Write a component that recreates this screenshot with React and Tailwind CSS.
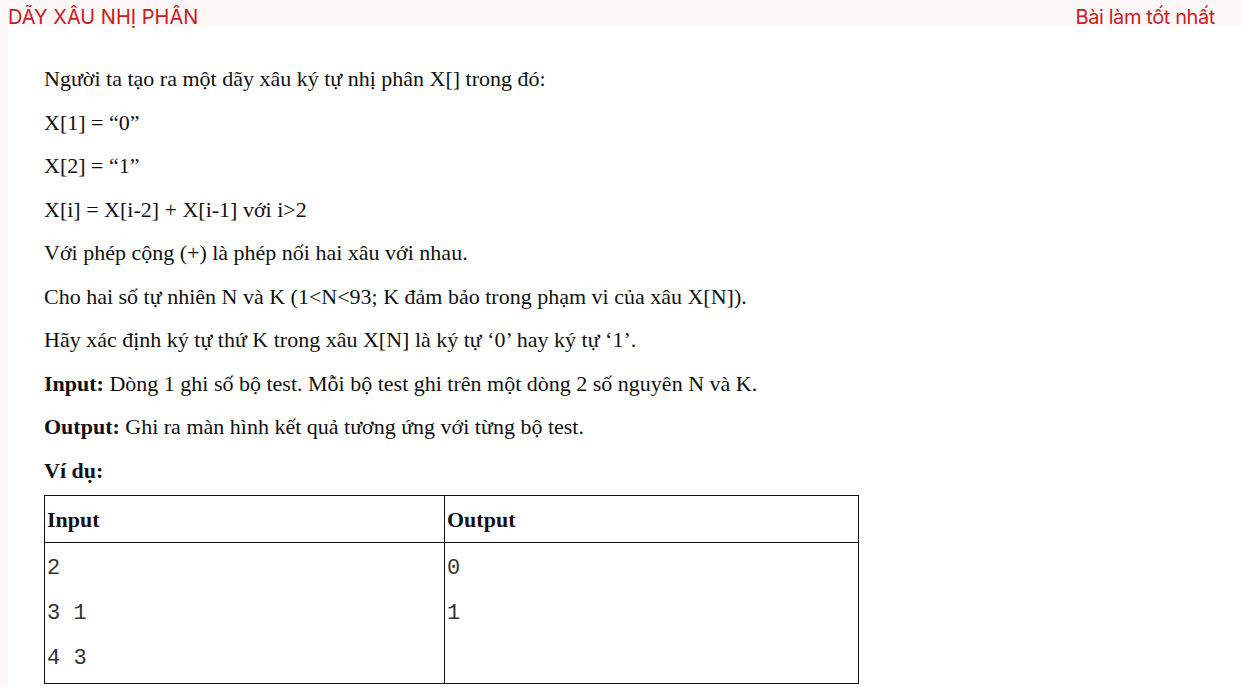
export default function App() {
  const serif = { fontFamily: '"Liberation Serif", "Times New Roman", serif' };
  const mono = { fontFamily: '"Liberation Mono", "Courier New", monospace' };
  const lines = [
    <>Người ta tạo ra một dãy xâu ký tự nhị phân X[] trong đó:</>,
    <>X[1] = “0”</>,
    <>X[2] = “1”</>,
    <>X[i] = X[i-2] + X[i-1] với i&gt;2</>,
    <>Với phép cộng (+) là phép nối hai xâu với nhau.</>,
    <>Cho hai số tự nhiên N và K (1&lt;N&lt;93; K đảm bảo trong phạm vi của xâu X[N]).</>,
    <>Hãy xác định ký tự thứ K trong xâu X[N] là ký tự ‘0’ hay ký tự ‘1’.</>,
    <><b>Input:</b> Dòng 1 ghi số bộ test. Mỗi bộ test ghi trên một dòng 2 số nguyên N và K.</>,
    <><b>Output:</b> Ghi ra màn hình kết quả tương ứng với từng bộ test.</>,
    <><b>Ví dụ:</b></>,
  ];
  return (
    <div className="min-h-[687px] bg-[#fdf7f7] overflow-hidden">
      <div className="h-[27px] flex items-start justify-between pl-[8px] pr-[27px] pt-[4px] text-[#c8201e] text-[20px] leading-[27px]" style={{ fontFamily: 'Inter, "Noto Sans", sans-serif' }}>
        <span>DÃY XÂU NHỊ PHÂN</span>
        <span className="tracking-[-0.4px]">Bài làm tốt nhất</span>
      </div>
      <div className="ml-[8px] bg-white min-h-[660px] pl-[36px] pt-[30px] text-[#111] text-[22px]" style={serif}>
        {lines.map((l, i) => (
          <p key={i} className="leading-[43.5px] h-[43.5px] whitespace-nowrap">{l}</p>
        ))}
        <table className="border-collapse w-[815px] mt-[3px]">
          <tbody>
            <tr className="h-[47px]">
              <td className="border border-[#111] w-[400px] px-[2px] font-bold align-middle">Input</td>
              <td className="border border-[#111] px-[2px] font-bold align-middle">Output</td>
            </tr>
            <tr>
              <td className="border border-[#111] align-top px-[2px] pt-[3px] text-[22px] text-[#333]" style={mono}>
                <div className="leading-[45px] whitespace-pre">2</div>
                <div className="leading-[45px] whitespace-pre">3 1</div>
                <div className="leading-[45px] whitespace-pre pb-[2px]">4 3</div>
              </td>
              <td className="border border-[#111] align-top px-[2px] pt-[3px] text-[22px] text-[#333]" style={mono}>
                <div className="leading-[45px]">0</div>
                <div className="leading-[45px]">1</div>
              </td>
            </tr>
          </tbody>
        </table>
      </div>
    </div>
  );
}
